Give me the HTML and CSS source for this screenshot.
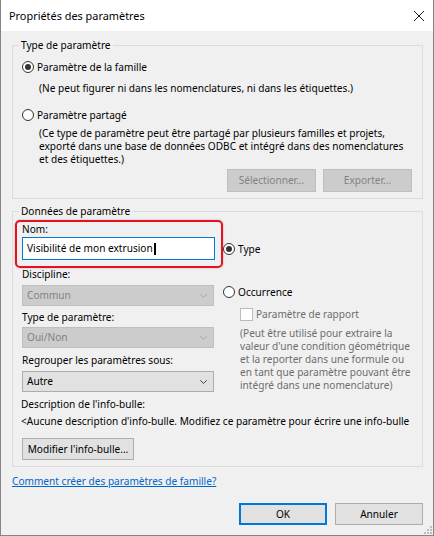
FILE: index.html
```html
<!DOCTYPE html>
<html lang="fr">
<head>
<meta charset="utf-8">
<title>Propriétés des paramètres</title>
<link rel="stylesheet" href="styles.css">
</head>
<body>
<div class="window">
  <div class="titlebar">
    <span class="title">Propriétés des paramètres</span>
    <svg class="close" width="10" height="10" viewBox="0 0 10 10"><path d="M0 0L10 10M10 0L0 10" stroke="#1a1a1a" stroke-width="1"/></svg>
  </div>
  <div class="client">
    <fieldset class="group group-type">
      <legend>Type de paramètre</legend>
      <div class="radio-row"><span class="radio checked"></span><span>Paramètre de la famille</span></div>
      <p class="note note-family">(Ne peut figurer ni dans les nomenclatures, ni dans les étiquettes.)</p>
      <div class="radio-row row-shared"><span class="radio"></span><span>Paramètre partagé</span></div>
      <p class="note note-shared">(Ce type de paramètre peut être partagé par plusieurs familles et projets,<br>exporté dans une base de données ODBC et intégré dans des nomenclatures<br>et des étiquettes.)</p>
      <div class="btn-row">
        <button class="btn btn-wide" disabled>Sélectionner...</button>
        <button class="btn btn-wide" disabled>Exporter...</button>
      </div>
    </fieldset>

    <fieldset class="group group-data">
      <legend>Données de paramètre</legend>
      <div class="data-cols">
        <div class="col-left">
          <div class="highlight"></div>
          <div class="label">Nom:</div>
          <div class="textbox">Visibilité de mon extrusion<span class="caret"></span></div>
          <div class="label label-discipline">Discipline:</div>
          <div class="combo combo-disabled combo-1"><span>Commun</span><svg class="chev" width="7" height="4" viewBox="0 0 7 4"><path d="M0.3 0.3L3.5 3.5L6.7 0.3" fill="none" stroke="#a6a6a6" stroke-width="1"/></svg></div>
          <div class="label label-type">Type de paramètre:</div>
          <div class="combo combo-disabled combo-2"><span>Oui/Non</span><svg class="chev" width="7" height="4" viewBox="0 0 7 4"><path d="M0.3 0.3L3.5 3.5L6.7 0.3" fill="none" stroke="#a6a6a6" stroke-width="1"/></svg></div>
          <div class="label label-group">Regrouper les paramètres sous:</div>
          <div class="combo combo-3"><span>Autre</span><svg class="chev" width="7" height="4" viewBox="0 0 7 4"><path d="M0.3 0.3L3.5 3.5L6.7 0.3" fill="none" stroke="#404040" stroke-width="1"/></svg></div>
        </div>
        <div class="col-right">
          <div class="radio-row row-typeinst"><span class="radio checked"></span><span>Type</span></div>
          <div class="radio-row row-occ"><span class="radio"></span><span>Occurrence</span></div>
          <div class="check-row"><span class="checkbox"></span><span>Paramètre de rapport</span></div>
          <p class="note note-gray">(Peut être utilisé pour extraire la<br>valeur d'une condition géométrique<br>et la reporter dans une formule ou<br>en tant que paramètre pouvant être<br>intégré dans une nomenclature)</p>
        </div>
      </div>
      <div class="desc-label">Description de l'info-bulle:</div>
      <div class="desc-text">&lt;Aucune description d'info-bulle. Modifiez ce paramètre pour écrire une info-bulle</div>
      <button class="btn btn-modify">Modifier l'info-bulle...</button>
    </fieldset>

    <a class="help-link" href="#">Comment créer des paramètres de famille?</a>

    <div class="footer">
      <button class="btn btn-footer btn-default">OK</button>
      <button class="btn btn-footer">Annuler</button>
    </div>
  </div>
  <svg class="grip" width="9" height="9" viewBox="0 0 9 9">
    <rect x="7" y="1" width="2" height="2" fill="#bdbdbd"/>
    <rect x="4" y="4" width="2" height="2" fill="#bdbdbd"/>
    <rect x="7" y="4" width="2" height="2" fill="#bdbdbd"/>
    <rect x="1" y="7" width="2" height="2" fill="#bdbdbd"/>
    <rect x="4" y="7" width="2" height="2" fill="#bdbdbd"/>
    <rect x="7" y="7" width="2" height="2" fill="#bdbdbd"/>
  </svg>
</div>
</body>
</html>
```

FILE: styles.css
```css
* { box-sizing: border-box; }
html, body { margin: 0; padding: 0; }
body {
  width: 434px;
  height: 536px;
  font-family: "Noto Sans", "Segoe UI", sans-serif;
  font-size: 10.1px;
  line-height: 13px;
  color: #000;
  background: #f0f0f0;
}
.window {
  position: relative;
  width: 434px;
  height: 536px;
  border: 1px solid #858585;
  border-top: none;
  background: #f0f0f0;
  display: flex;
  flex-direction: column;
}
.titlebar {
  flex: none;
  height: 31px;
  background: #fff;
  display: flex;
  align-items: center;
  padding: 0 9px 0 8px;
}
.title { font-size: 10.9px; line-height: 31px; }
.close { display: block; margin-left: auto; }
.client {
  flex: 1;
  display: flex;
  flex-direction: column;
  align-items: stretch;
  padding: 8px 10px 0 11px;
}
.group {
  margin: 0;
  min-width: 0;
  border: 1px solid #dcdcdc;
  padding: 8px 10px 6px 9px;
}
.group legend {
  padding: 0 2px;
  margin-left: -3px;
  line-height: 13px;
}
.group-data { margin-top: 6px; padding-top: 5px; }

.radio-row {
  display: flex;
  align-items: center;
  gap: 3px;
  height: 14px;
  line-height: 14px;
  white-space: nowrap;
}
.radio {
  flex: none;
  position: relative;
  width: 12px;
  height: 12px;
  border: 1px solid #333;
  border-radius: 50%;
  background: #fff;
}
.radio.checked::after {
  content: "";
  position: absolute;
  left: 2px;
  top: 2px;
  width: 6px;
  height: 6px;
  border-radius: 50%;
  background: #333;
}
.note { margin: 0; white-space: nowrap; }
.note-family { margin: 8px 0 0 17px; }
.row-shared { margin-top: 13px; }
.note-shared { margin: 5px 0 0 17px; }

.btn {
  font: inherit;
  line-height: 13px;
  color: #000;
  background: #e1e1e1;
  border: 1px solid #adadad;
  padding: 0;
  margin: 0;
  white-space: nowrap;
}
.btn:disabled {
  color: #838383;
  background: #cccccc;
  border-color: #bfbfbf;
}
.btn-row {
  display: flex;
  justify-content: flex-end;
  gap: 7px;
  margin-top: 3px;
}
.btn-wide { width: 89px; height: 23px; }

.data-cols { display: flex; }
.col-left { position: relative; width: 193px; flex: none; }
.highlight {
  position: absolute;
  left: -7px;
  top: -3px;
  width: 208px;
  height: 48px;
  border: 2px solid #e81123;
  border-radius: 5px;
  box-shadow: 0 0 2px rgba(90, 0, 0, 0.35);
  pointer-events: none;
}
.label { white-space: nowrap; }
.textbox {
  margin-top: 1px;
  height: 23px;
  display: flex;
  align-items: center;
  padding-left: 4px;
  background: #fff;
  border: 1px solid #0078d7;
  white-space: nowrap;
}
.caret {
  display: inline-block;
  width: 2px;
  height: 12px;
  background: #000;
  margin-left: 1px;
}
.label-discipline { margin-top: 8px; }
.label-type { margin-top: 5px; }
.label-group { margin-top: 6px; }
.combo {
  width: 192px;
  height: 21px;
  display: flex;
  align-items: center;
  padding: 0 6px 0 4px;
  background: #e1e1e1;
  border: 1px solid #adadad;
}
.combo-disabled {
  background: #cccccc;
  border-color: #bfbfbf;
  color: #838383;
}
.combo-1 { margin-top: 4px; }
.combo-2 { margin-top: 3px; }
.combo-3 { margin-top: 4px; }
.chev { display: block; margin-left: auto; }

.col-right { margin-left: 8px; padding-top: 19px; }
.row-occ { margin-top: 29px; }
.check-row {
  display: flex;
  align-items: center;
  gap: 3px;
  margin: 9px 0 0 17px;
  color: #6d6d6d;
  white-space: nowrap;
}
.checkbox {
  flex: none;
  width: 13px;
  height: 13px;
  background: #fff;
  border: 1px solid #bcbcbc;
}
.note-gray { margin: 6px 0 0 17px; color: #6d6d6d; }

.desc-label { margin: 6px 0 0 -1px; white-space: nowrap; }
.desc-text { margin: 4px 0 0 -1px; white-space: nowrap; }
.btn-modify {
  display: block;
  margin-top: 10px;
  width: 112px;
  height: 22px;
}

.help-link {
  align-self: flex-start;
  margin-top: 8px;
  color: #0066cc;
  text-decoration: underline;
  white-space: nowrap;
}
.footer {
  display: flex;
  justify-content: flex-end;
  gap: 8px;
  margin-top: 15px;
}
.btn-footer { width: 88px; height: 22px; }
.btn-default { border: 2px solid #0078d7; }

.grip {
  position: absolute;
  right: 1px;
  bottom: 1px;
  display: block;
}
```
